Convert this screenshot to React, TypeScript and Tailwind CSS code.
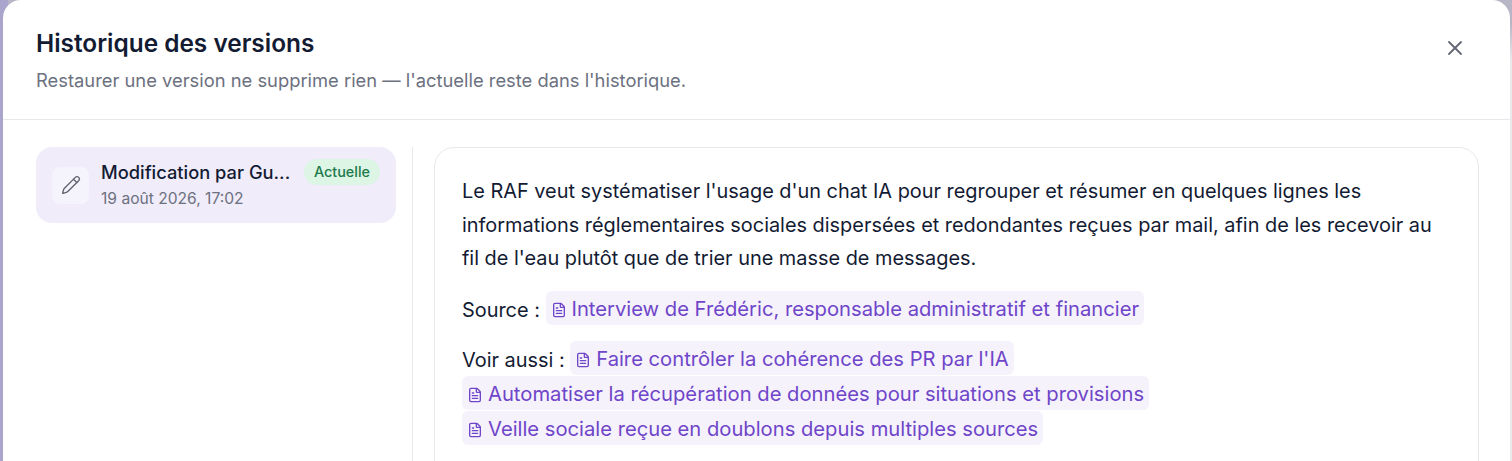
import React from 'react';
import { X, Pencil, FileText } from 'lucide-react';

function DocLink({ label }: { label: string }) {
  return (
    <span className="align-[1px] leading-none py-[4.5px] px-[5px] rounded-[6px] bg-[#f5f2fb] text-[#6f45c9] text-[20.2px]">
      <FileText className="inline-block align-[-2px] mr-[5px] w-[16px] h-[16px]" strokeWidth={2} />
      {label}
    </span>
  );
}

export default function App() {
  return (
    <div className="h-[461px] w-[1512px] overflow-hidden bg-[linear-gradient(to_right,#aaa5cc_0,#aaa5cc_8px,transparent_8px),linear-gradient(to_bottom,#b6b6c6_0,#b6b6c6_24px,#e9e9ec_60px)] pl-[3px] pr-[2px] font-['Inter',sans-serif]">
      <div className="h-[520px] bg-white rounded-t-[18px]">
        {/* Header */}
        <header className="h-[120px] border-b border-[#e7e8ec] pl-[33px] pr-[43px] pt-[26px] flex justify-between">
          <div>
            <h1 className="text-[24.4px] leading-[34px] font-semibold text-[#131b33]">Historique des versions</h1>
            <p className="mt-[7px] text-[18.35px] leading-[26px] text-[#6c7180]">
              Restaurer une version ne supprime rien — l'actuelle reste dans l'historique.
            </p>
          </div>
          <button className="h-[24px] mt-[10px] text-[#646875]">
            <X className="w-[24px] h-[24px]" strokeWidth={1.8} />
          </button>
        </header>

        <div className="flex pl-[33px] pr-[31px] pt-[27px]">
          {/* Version list */}
          <aside className="w-[360px] shrink-0">
            <div className="h-[76px] rounded-[16px] bg-[#f0ecfa] px-[16px] flex items-center gap-[12px]">
              <div className="w-[37px] h-[37px] shrink-0 rounded-[8px] bg-[#f5f3fb] flex items-center justify-center text-[#5f6370]">
                <Pencil className="w-[20px] h-[20px]" strokeWidth={1.6} />
              </div>
              <div className="flex-1 min-w-0">
                <div className="flex items-center justify-between">
                  <span className="text-[18.3px] leading-[26px] font-medium text-[#131b33] whitespace-nowrap">Modification par Gu...</span>
                  <span className="h-[26px] px-[10px] rounded-full bg-[#dcf5e5] text-[#1c7a4b] text-[14.4px] font-medium flex items-center">Actuelle</span>
                </div>
                <div className="mt-[1px] text-[15.6px] leading-[25px] text-[#6c7180]">19 août 2026, 17:02</div>
              </div>
            </div>
          </aside>

          <div className="w-px h-[320px] ml-[16px] mr-[21px] bg-[#e7e8ec]" />

          {/* Content */}
          <main className="flex-1 h-[340px] rounded-t-[20px] border border-[#e7e8ec] px-[27px] pt-[27px] text-[19.9px] text-[#131b33]">
            <p className="leading-[33.5px]">
              Le RAF veut systématiser l'usage d'un chat IA pour regrouper et résumer en quelques lignes les informations réglementaires sociales dispersées et redondantes reçues par mail, afin de les recevoir au fil de l'eau plutôt que de trier une masse de messages.
            </p>
            <p className="mt-[17px] leading-[35px]">
              Source : <DocLink label="Interview de Frédéric, responsable administratif et financier" />
            </p>
            <p className="mt-[15px] leading-[35px]">
              Voir aussi : <DocLink label="Faire contrôler la cohérence des PR par l'IA" />
              <br />
              <DocLink label="Automatiser la récupération de données pour situations et provisions" />
              <br />
              <DocLink label="Veille sociale reçue en doublons depuis multiples sources" />
            </p>
          </main>
        </div>
      </div>
    </div>
  );
}
